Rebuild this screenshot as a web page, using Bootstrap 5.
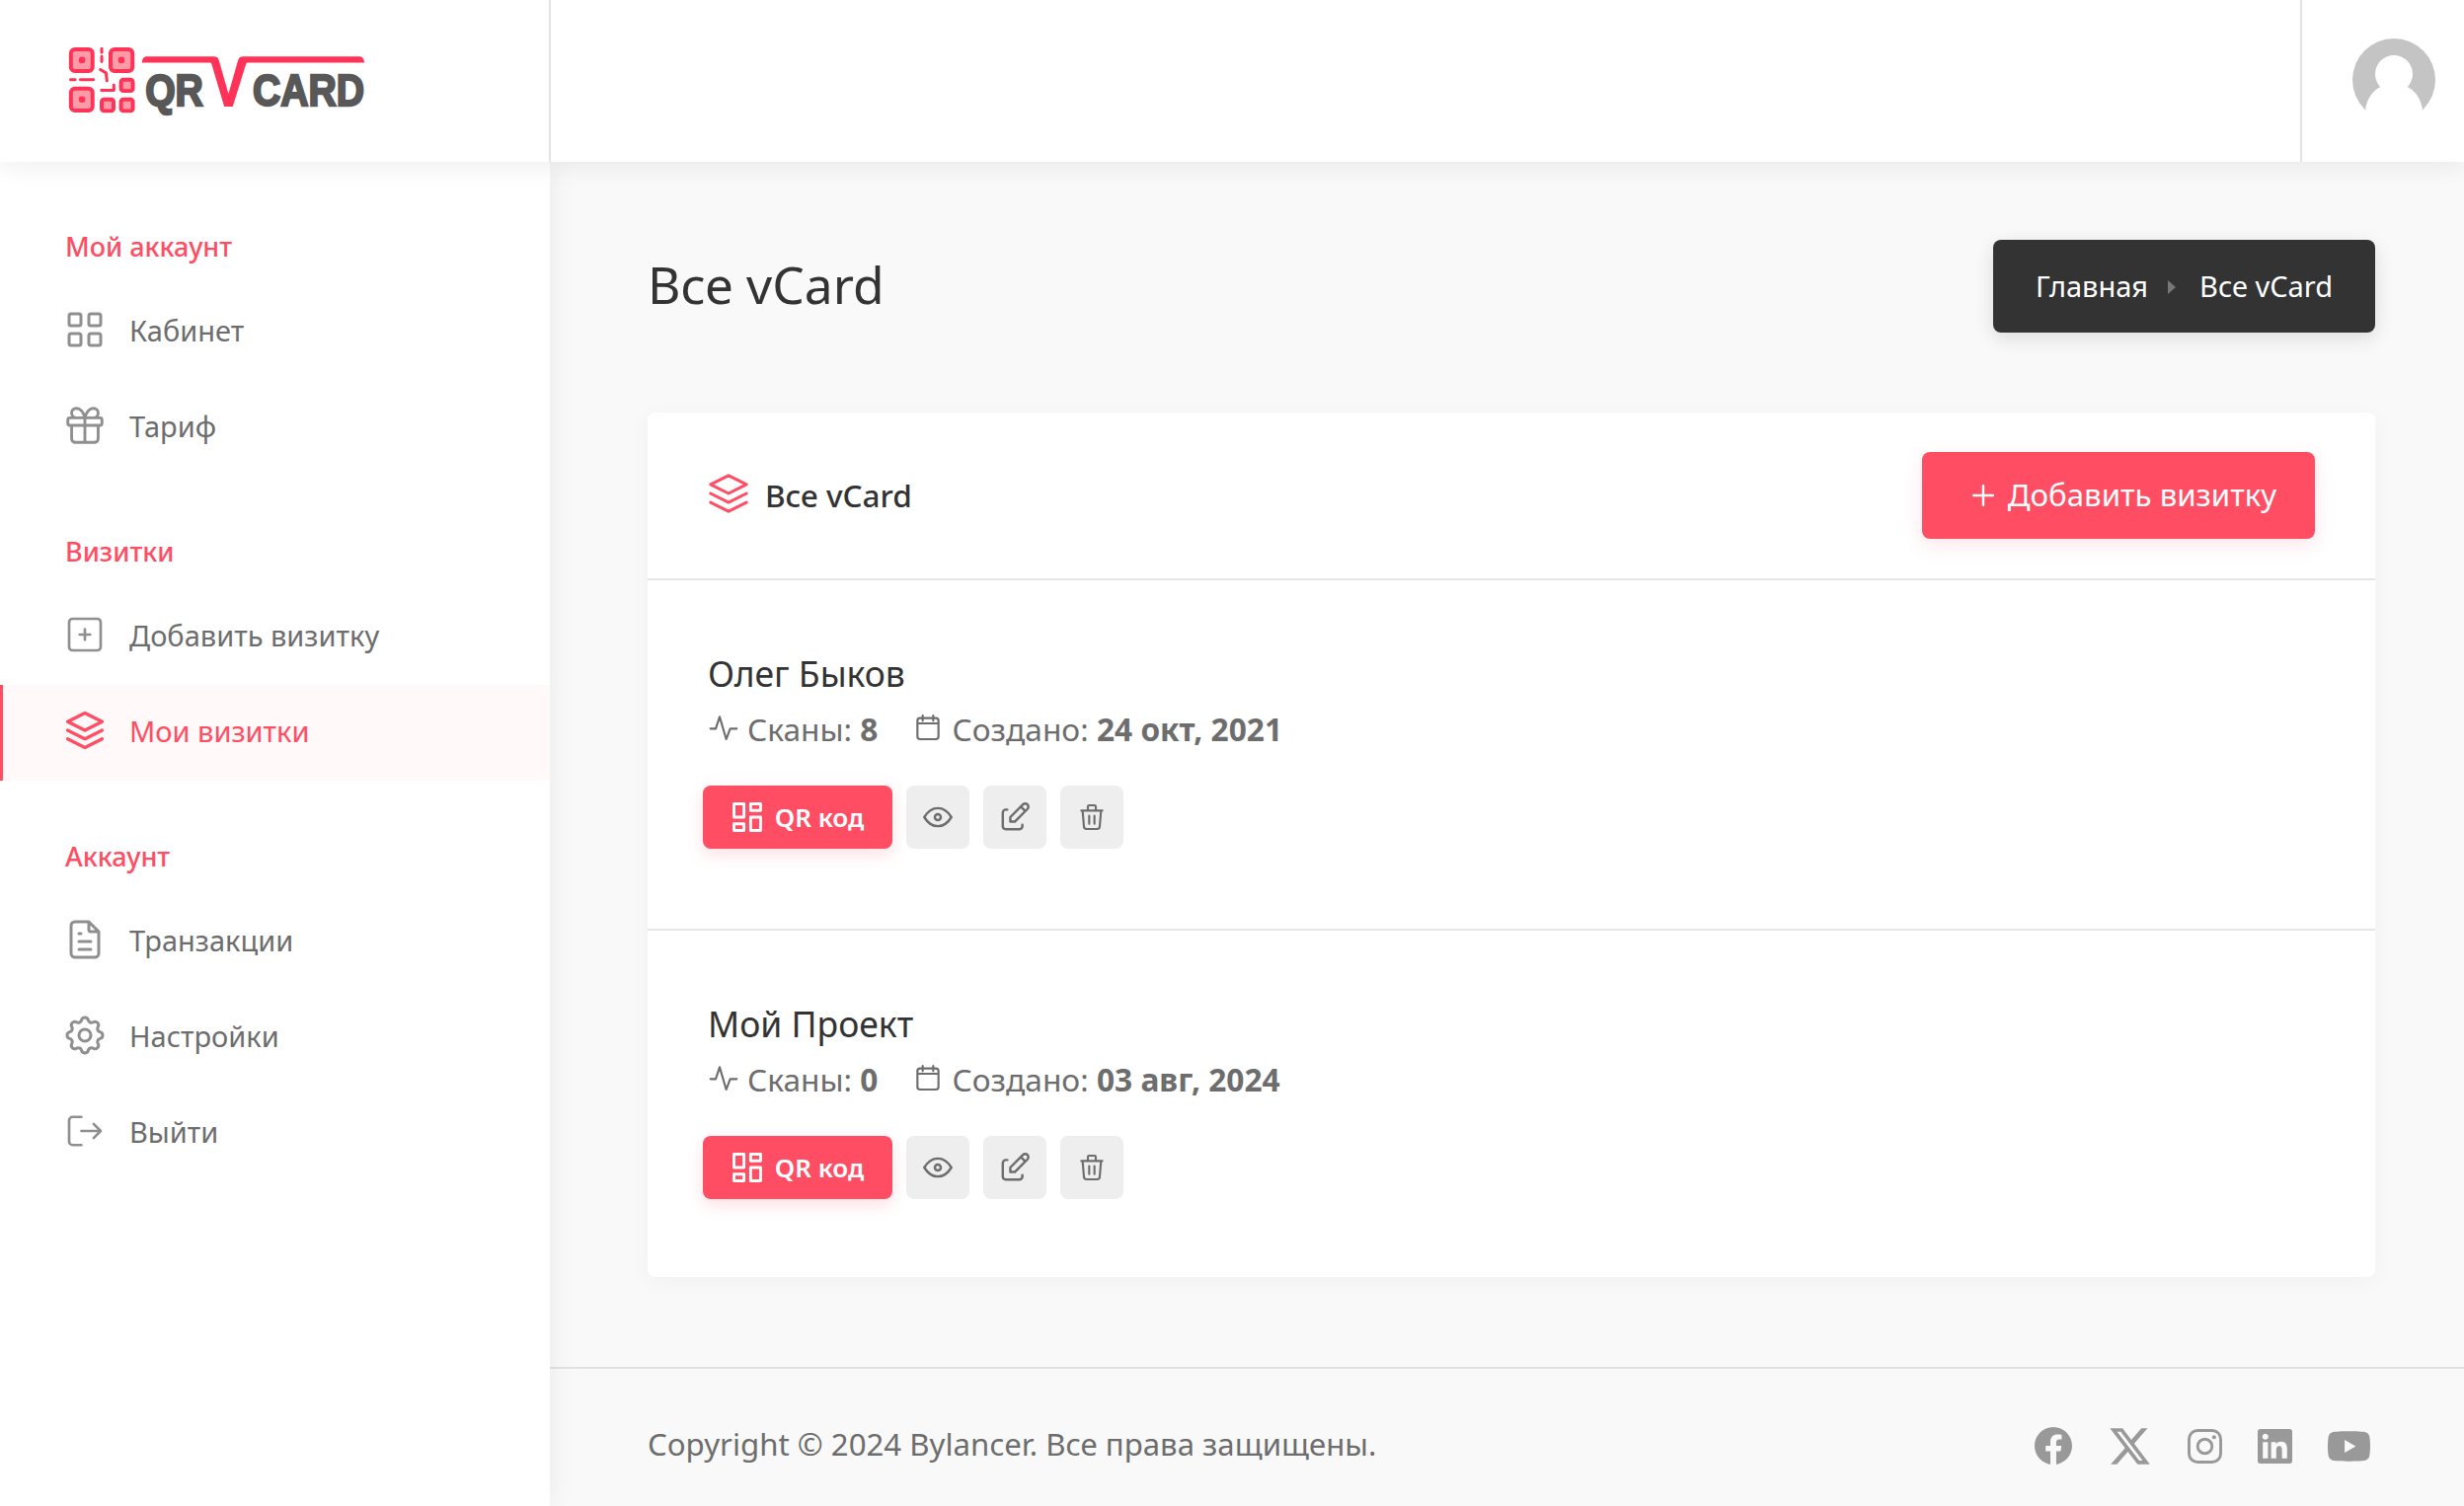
<!DOCTYPE html>
<html lang="ru">
<head>
    <meta charset="UTF-8">
    <meta name="viewport" content="width=device-width, initial-scale=1.0">
    <title>Все vCard</title>
    <link rel="stylesheet" href="https://cdn.jsdelivr.net/npm/bootstrap@5.3.0/dist/css/bootstrap.min.css">
    <style>
        body { font-family: "Noto Sans", "Liberation Sans", sans-serif; font-size: 28px; color: #6d6d6d; background: #f9f9f9; overflow: hidden; }
        .qv-ic { width: 48px; height: 48px; fill: none; stroke: currentColor; stroke-width: 1.5; stroke-linecap: round; stroke-linejoin: round; flex-shrink: 0; }
        .qv-top { height: 164px; background: #fff; box-shadow: 0 4px 24px rgba(0,0,0,.07); position: relative; z-index: 3; }
        .qv-brand { width: 558px; border-right: 2px solid #e4e4e4; padding: 0 0 0 69px; }
        .qv-logo { margin-top: 5px; }
        .qv-usr { width: 166px; border-left: 2px solid #e4e4e4; padding-left: 51px; }
        .qv-ava { margin-top: -2px; }
        .qv-wrap { min-height: 1362px; }
        .qv-side { width: 557px; background: #fff; padding-top: 66px; box-shadow: 4px 0 24px rgba(0,0,0,.05); position: relative; z-index: 2; flex-shrink: 0; }
        .qv-label { height: 40px; line-height: 40px; margin: 0 0 18px 66px; color: #ff4d64; font-size: 27px; font-weight: 500; }
        .qv-group { margin-bottom: 57px; }
        .qv-item { height: 97px; padding: 0 0 4px 62px; gap: 21px; color: #6d6d6d; font-size: 29px; text-decoration: none; }
        .qv-item .qv-ic { color: #8f8f8f; margin-top: -2px; }
        .qv-item.qv-on { background: #fff9f9; color: #ff4d64; border-left: 3px solid #ff4d64; padding-left: 59px; }
        .qv-item.qv-on .qv-ic { color: #ff4d64; }
        .qv-main { padding: 79px 90px 0 99px; }
        .qv-title { font-size: 51.5px; font-weight: 400; color: #333; margin: 0; line-height: 90px; padding-bottom: 4px; }
        .qv-crumb { height: 94px; padding: 0 43px; background: #333; border-radius: 8px; box-shadow: 0 6px 20px rgba(0,0,0,.12); color: #fff; font-size: 29px; margin: 0; }
        .qv-sep { width: 0; height: 0; border-left: 8px solid #777; border-top: 7px solid transparent; border-bottom: 7px solid transparent; margin: 2px 24px 0 20px; }
        .qv-panel { margin-top: 81px; border: 0; border-radius: 8px; box-shadow: 0 4px 24px rgba(0,0,0,.04); }
        .qv-panel-head { height: 170px; padding: 0 61px; background: #fff; border-bottom: 2px solid #e6e6e6; border-radius: 8px 8px 0 0; }
        .qv-panel-head .qv-ic { width: 50px; height: 50px; color: #ff4d64; margin: -4px 12px 0 -4px; stroke-width: 1.3; }
        .qv-panel-name { font-size: 31.5px; font-weight: 500; color: #333; }
        .btn.qv-add { height: 88px; width: 398px; background: #ff4d64; color: #fff; border: 0; border-radius: 8px; font-size: 31.2px; gap: 14px; padding: 0 0 2px 12px; box-shadow: 0 6px 20px rgba(255,77,100,.15); }
        .qv-add svg { width: 22px; height: 22px; stroke: #fff; stroke-width: 2.4; stroke-linecap: round; margin-top: 2px; }
        .qv-row { height: 353px; padding: 70px 61px 0; }
        .qv-row + .qv-row { border-top: 2px solid #e6e6e6; }
        .qv-name { font-size: 35.5px; line-height: 48px; color: #333; font-weight: 400; margin: 0 0 8px; }
        .qv-meta { line-height: 50px; font-size: 31.7px; color: #6d6d6d; }
        .qv-meta .qv-ic { width: 32px; height: 32px; stroke-width: 1.6; margin: -4px 8px 0 0; }
        .qv-meta .qv-ic.qv-cal { margin-left: 35px; }
        .qv-btns { margin: 32px 0 0 -5px; gap: 14px; }
        .btn.qv-qr { height: 64px; width: 192px; background: #ff4d64; color: #fff; border: 0; border-radius: 8px; font-size: 26px; font-weight: 600; gap: 12px; box-shadow: 0 6px 16px rgba(255,77,100,.18); }
        .qv-qr .qv-ic { width: 32px; height: 32px; stroke-width: 1.7; }
        .btn.qv-sq { height: 64px; width: 64px; background: #eee; color: #6d6d6d; border: 0; border-radius: 8px; padding: 0; }
        .qv-sq .qv-ic { width: 32px; height: 32px; stroke-width: 1.6; }
        .qv-foot { margin-top: 91px; border-top: 2px solid #e2e2e2; height: 141px; padding: 14px 95px 0 99px; font-size: 31.2px; color: #6d6d6d; }
        .qv-soc { gap: 36px; color: #999; margin-top: 3px; }
        .qv-soc svg { fill: currentColor; display: block; }
    </style>
</head>
<body>
    <svg width="0" height="0" class="position-absolute">
        <symbol id="i-grid" viewBox="0 0 24 24"><rect x="4" y="4" width="6" height="6" rx="1"/><rect x="14" y="4" width="6" height="6" rx="1"/><rect x="4" y="14" width="6" height="6" rx="1"/><rect x="14" y="14" width="6" height="6" rx="1"/></symbol>
        <symbol id="i-gift" viewBox="-.5 -.5 25 25"><path d="M3 9a1 1 0 0 1 1 -1h16a1 1 0 0 1 1 1v2a1 1 0 0 1 -1 1h-16a1 1 0 0 1 -1 -1z M12 8v13 M19 12v7a2 2 0 0 1 -2 2h-10a2 2 0 0 1 -2 -2v-7 M7.5 8a2.5 2.5 0 0 1 0 -5a4.8 8 0 0 1 4.5 5a4.8 8 0 0 1 4.5 -5a2.5 2.5 0 0 1 0 5"/></symbol>
        <symbol id="i-plus" viewBox="-1.5 -1.5 27 27"><path d="M9 12h6 M12 9v6 M3 5a2 2 0 0 1 2 -2h14a2 2 0 0 1 2 2v14a2 2 0 0 1 -2 2h-14a2 2 0 0 1 -2 -2z"/></symbol>
        <symbol id="i-stack" viewBox="1 1 22 22"><path d="M12 4l-8 4l8 4l8 -4z M4 12l8 4l8 -4 M4 16l8 4l8 -4"/></symbol>
        <symbol id="i-file" viewBox="0 0 24 24"><path d="M14 3v4a1 1 0 0 0 1 1h4 M17 21h-10a2 2 0 0 1 -2 -2v-14a2 2 0 0 1 2 -2h7l5 5v11a2 2 0 0 1 -2 2z M9 9h1 M9 13h6 M9 17h6"/></symbol>
        <symbol id="i-gear" viewBox="0 0 24 24"><path d="M10.325 4.317c.426 -1.756 2.924 -1.756 3.35 0a1.724 1.724 0 0 0 2.573 1.066c1.543 -.94 3.31 .826 2.37 2.37a1.724 1.724 0 0 0 1.065 2.572c1.756 .426 1.756 2.924 0 3.35a1.724 1.724 0 0 0 -1.066 2.573c.94 1.543 -.826 3.31 -2.37 2.37a1.724 1.724 0 0 0 -2.572 1.065c-.426 1.756 -2.924 1.756 -3.35 0a1.724 1.724 0 0 0 -2.573 -1.066c-1.543 .94 -3.31 -.826 -2.37 -2.37a1.724 1.724 0 0 0 -1.065 -2.572c-1.756 -.426 -1.756 -2.924 0 -3.35a1.724 1.724 0 0 0 1.066 -2.573c-.94 -1.543 .826 -3.31 2.37 -2.37c1 .608 2.296 .07 2.572 -1.065z M9 12a3 3 0 1 0 6 0a3 3 0 0 0 -6 0"/></symbol>
        <symbol id="i-out" viewBox="-1.5 -1.5 27 27"><path d="M10 4h-5a2 2 0 0 0 -2 2v12a2 2 0 0 0 2 2h5 M10 12h11 M17 8l4 4l-4 4"/></symbol>
        <symbol id="i-act" viewBox="0 0 24 24"><path d="M2 13h4l3 -9l5 17l3 -8h5"/></symbol>
        <symbol id="i-cal" viewBox="0 0 24 24"><path d="M4 7a2 2 0 0 1 2 -2h12a2 2 0 0 1 2 2v12a2 2 0 0 1 -2 2h-12a2 2 0 0 1 -2 -2z M16 3v4 M8 3v4 M4 9h16"/></symbol>
        <symbol id="i-qr" viewBox="2.5 2.5 19 19"><path d="M4 4h6v8h-6z M4 16h6v4h-6z M14 12h6v8h-6z M14 4h6v4h-6z"/></symbol>
        <symbol id="i-eye" viewBox="1.5 1.5 21 21"><path d="M10 12a2 2 0 1 0 4 0a2 2 0 0 0 -4 0 M21 12c-2.4 4 -5.4 6 -9 6c-3.6 0 -6.6 -2 -9 -6c2.4 -4 5.4 -6 9 -6c3.6 0 6.6 2 9 6"/></symbol>
        <symbol id="i-edit" viewBox="1.5 1.5 21 21"><path d="M7 7h-1a2 2 0 0 0 -2 2v9a2 2 0 0 0 2 2h9a2 2 0 0 0 2 -2v-1 M20.385 6.585a2.1 2.1 0 0 0 -2.97 -2.97l-8.415 8.385v3h3z M16 5l3 3"/></symbol>
        <symbol id="i-trash" viewBox="0 0 24 24"><path d="M4 7h16 M10 11v6 M14 11v6 M5 7l1 12a2 2 0 0 0 2 2h8a2 2 0 0 0 2 -2l1 -12 M9 7v-3a1 1 0 0 1 1 -1h4a1 1 0 0 1 1 1v3"/></symbol>
    </svg>

    <header class="qv-top d-flex">
        <div class="qv-brand d-flex align-items-center">
            <svg class="qv-logo" width="302" height="73" viewBox="87 84 905 220">
                <g fill="#ff9aa6" stroke="#ff3358" stroke-width="12">
                    <rect x="93" y="90" width="66" height="66" rx="12"/>
                    <rect x="214" y="90" width="67" height="66" rx="12"/>
                    <rect x="93" y="210" width="66" height="67" rx="12"/>
                    <rect x="246" y="183" width="36" height="34" rx="7"/>
                    <rect x="187" y="243" width="36" height="35" rx="7"/>
                    <rect x="246" y="243" width="36" height="35" rx="7"/>
                </g>
                <g fill="#ff3358">
                    <circle cx="127" cy="123" r="10"/>
                    <circle cx="247" cy="123" r="10"/>
                    <circle cx="127" cy="243" r="10"/>
                </g>
                <path d="M187 88v12 M187 112v16 M183 152l17 10l3 24 M92 183h14 M122 183h40 M186 215h38v-16" fill="none" stroke="#ff3358" stroke-width="9" stroke-linecap="round" stroke-linejoin="round"/>
                <path d="M310 131c0 -12 6 -19 14 -19h205c8 0 13 3 16 12l29 102l29 -102c3 -9 9 -12 17 -12h354c8 0 14 7 15 19h-355c-4 0 -6 2 -7 6l-40 128h-26l-38 -128c-1 -4 -3 -6 -7 -6z" fill="#ff3358"/>
                <text transform="translate(320 262) scale(1 1.15)" font-family="Liberation Sans, sans-serif" font-weight="700" font-size="118" fill="#585858" stroke="#585858" stroke-width="6">QR</text>
                <text transform="translate(648 262) scale(1 1.15)" font-family="Liberation Sans, sans-serif" font-weight="700" font-size="118" fill="#585858" stroke="#585858" stroke-width="6">CARD</text>
            </svg>
        </div>
        <div class="flex-grow-1"></div>
        <div class="qv-usr d-flex align-items-center">
            <svg class="qv-ava" width="84" height="84" viewBox="0 0 84 84">
                <circle cx="42" cy="42" r="42" fill="#c4c4c4"/>
                <circle cx="42" cy="36" r="19" fill="#fff"/>
                <path d="M13 72c3 -18 15 -26 29 -26s26 8 29 26a42 42 0 0 1 -13 12h-32a42 42 0 0 1 -13 -12z" fill="#fff"/>
            </svg>
        </div>
    </header>

    <div class="d-flex qv-wrap">
        <aside class="qv-side">
            <div class="qv-group">
                <div class="qv-label">Мой аккаунт</div>
                <a href="#" class="qv-item d-flex align-items-center"><svg class="qv-ic"><use href="#i-grid"/></svg>Кабинет</a>
                <a href="#" class="qv-item d-flex align-items-center"><svg class="qv-ic"><use href="#i-gift"/></svg>Тариф</a>
            </div>
            <div class="qv-group">
                <div class="qv-label">Визитки</div>
                <a href="#" class="qv-item d-flex align-items-center"><svg class="qv-ic"><use href="#i-plus"/></svg>Добавить визитку</a>
                <a href="#" class="qv-item qv-on d-flex align-items-center"><svg class="qv-ic"><use href="#i-stack"/></svg>Мои визитки</a>
            </div>
            <div class="qv-group">
                <div class="qv-label">Аккаунт</div>
                <a href="#" class="qv-item d-flex align-items-center"><svg class="qv-ic"><use href="#i-file"/></svg>Транзакции</a>
                <a href="#" class="qv-item d-flex align-items-center"><svg class="qv-ic"><use href="#i-gear"/></svg>Настройки</a>
                <a href="#" class="qv-item d-flex align-items-center"><svg class="qv-ic"><use href="#i-out"/></svg>Выйти</a>
            </div>
        </aside>

        <div class="flex-grow-1 d-flex flex-column">
            <main class="qv-main">
                <div class="d-flex justify-content-between align-items-center">
                    <h1 class="qv-title">Все vCard</h1>
                    <div class="qv-crumb d-flex align-items-center"><span>Главная</span><span class="qv-sep"></span><span>Все vCard</span></div>
                </div>

                <div class="card qv-panel">
                    <div class="qv-panel-head d-flex justify-content-between align-items-center">
                        <div class="d-flex align-items-center"><svg class="qv-ic"><use href="#i-stack"/></svg><span class="qv-panel-name">Все vCard</span></div>
                        <a href="#" class="btn qv-add d-flex align-items-center justify-content-center"><svg viewBox="0 0 22 22"><path d="M11 1v20 M1 11h20"/></svg>Добавить визитку</a>
                    </div>
                    <div class="qv-row">
                        <h4 class="qv-name">Олег Быков</h4>
                        <div class="qv-meta d-flex align-items-center">
                            <svg class="qv-ic"><use href="#i-act"/></svg><span>Сканы: <b>8</b></span>
                            <svg class="qv-ic qv-cal"><use href="#i-cal"/></svg><span>Создано: <b>24 окт, 2021</b></span>
                        </div>
                        <div class="qv-btns d-flex">
                            <a href="#" class="btn qv-qr d-flex align-items-center justify-content-center"><svg class="qv-ic"><use href="#i-qr"/></svg>QR код</a>
                            <a href="#" class="btn qv-sq d-flex align-items-center justify-content-center"><svg class="qv-ic"><use href="#i-eye"/></svg></a>
                            <a href="#" class="btn qv-sq d-flex align-items-center justify-content-center"><svg class="qv-ic"><use href="#i-edit"/></svg></a>
                            <a href="#" class="btn qv-sq d-flex align-items-center justify-content-center"><svg class="qv-ic"><use href="#i-trash"/></svg></a>
                        </div>
                    </div>
                    <div class="qv-row">
                        <h4 class="qv-name">Мой Проект</h4>
                        <div class="qv-meta d-flex align-items-center">
                            <svg class="qv-ic"><use href="#i-act"/></svg><span>Сканы: <b>0</b></span>
                            <svg class="qv-ic qv-cal"><use href="#i-cal"/></svg><span>Создано: <b>03 авг, 2024</b></span>
                        </div>
                        <div class="qv-btns d-flex">
                            <a href="#" class="btn qv-qr d-flex align-items-center justify-content-center"><svg class="qv-ic"><use href="#i-qr"/></svg>QR код</a>
                            <a href="#" class="btn qv-sq d-flex align-items-center justify-content-center"><svg class="qv-ic"><use href="#i-eye"/></svg></a>
                            <a href="#" class="btn qv-sq d-flex align-items-center justify-content-center"><svg class="qv-ic"><use href="#i-edit"/></svg></a>
                            <a href="#" class="btn qv-sq d-flex align-items-center justify-content-center"><svg class="qv-ic"><use href="#i-trash"/></svg></a>
                        </div>
                    </div>
                </div>
            </main>

            <footer class="qv-foot d-flex justify-content-between align-items-center">
                <span>Copyright © 2024 Bylancer. Все права защищены.</span>
                <div class="qv-soc d-flex align-items-center">
                    <svg width="38" height="38" viewBox="0 0 24 24"><path d="M24 12.073c0-6.627-5.373-12-12-12s-12 5.373-12 12c0 5.99 4.388 10.954 10.125 11.854v-8.385H7.078v-3.47h3.047V9.43c0-3.007 1.792-4.669 4.533-4.669 1.312 0 2.686.235 2.686.235v2.953H15.83c-1.491 0-1.956.925-1.956 1.874v2.25h3.328l-.532 3.47h-2.796v8.385C19.612 23.027 24 18.062 24 12.073z"/></svg>
                    <svg width="45" height="45" viewBox="0 0 24 24"><path d="M18.244 2.25h3.308l-7.227 8.26 8.502 11.24H16.17l-5.214-6.817L4.99 21.75H1.68l7.73-8.835L1.254 2.25H8.08l4.713 6.231zm-1.161 17.52h1.833L7.084 4.126H5.117z"/></svg>
                    <svg width="35" height="35" viewBox="0 0 24 24"><path fill="none" stroke="#999" stroke-width="2" d="M7 1h10a6 6 0 0 1 6 6v10a6 6 0 0 1 -6 6h-10a6 6 0 0 1 -6 -6v-10a6 6 0 0 1 6 -6z M7 12a5 5 0 1 0 10 0a5 5 0 0 0 -10 0"/><circle cx="18.4" cy="5.6" r="1.4"/></svg>
                    <svg width="35" height="35" viewBox="0 0 24 24"><path d="M20.447 20.452h-3.554v-5.569c0-1.328-.027-3.037-1.852-3.037-1.853 0-2.136 1.445-2.136 2.939v5.667H9.351V9h3.414v1.561h.046c.477-.9 1.637-1.85 3.37-1.85 3.601 0 4.267 2.37 4.267 5.455v6.286zM5.337 7.433c-1.144 0-2.063-.926-2.063-2.065 0-1.138.92-2.063 2.063-2.063 1.14 0 2.064.925 2.064 2.063 0 1.139-.925 2.065-2.064 2.065zm1.782 13.019H3.555V9h3.564v11.452zM22.225 0H1.771C.792 0 0 .774 0 1.729v20.542C0 23.227.792 24 1.771 24h20.451C23.2 24 24 23.227 24 22.271V1.729C24 .774 23.2 0 22.222 0h.003z"/></svg>
                    <svg width="43" height="43" viewBox="0 0 24 24"><path d="M23.498 6.186a3.016 3.016 0 0 0-2.122-2.136C19.505 3.545 12 3.545 12 3.545s-7.505 0-9.377.505A3.017 3.017 0 0 0 .502 6.186C0 8.07 0 12 0 12s0 3.93.502 5.814a3.016 3.016 0 0 0 2.122 2.136c1.871.505 9.376.505 9.376.505s7.505 0 9.377-.505a3.015 3.015 0 0 0 2.122-2.136C24 15.93 24 12 24 12s0-3.93-.502-5.814zM9.545 15.568V8.432L15.818 12l-6.273 3.568z"/></svg>
                </div>
            </footer>
        </div>
    </div>
</body>
</html>
